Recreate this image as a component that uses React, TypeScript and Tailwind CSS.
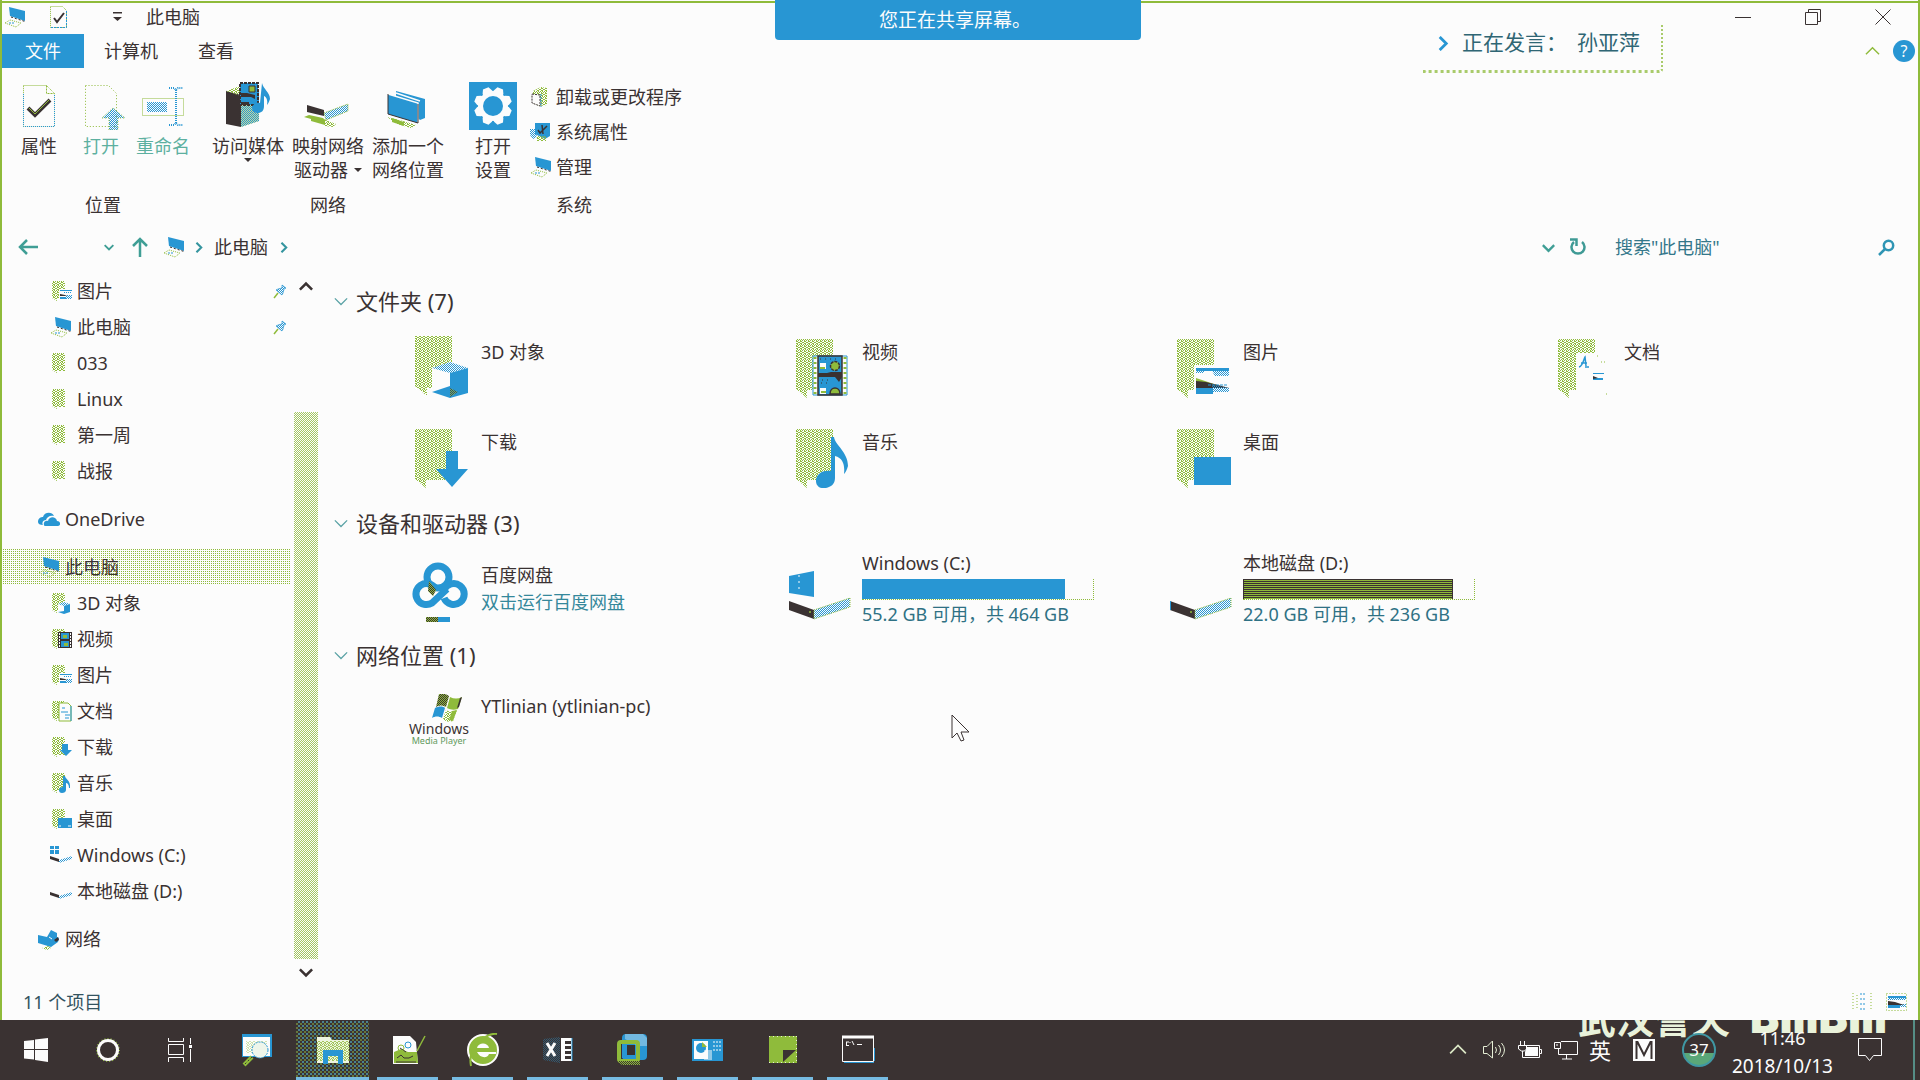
import React from "react";

const G = "#8fbb3b";
const B = "#2896d3";
const D = "#3a3232";
const W = "#fcfcfc";

function Patterns() {
  return (
    <svg className="absolute" width="0" height="0" aria-hidden="true">
      <defs>
        <pattern id="green" width="4" height="5" patternUnits="userSpaceOnUse">
          <path d="M0 0h1v1H0zM2 0h1v1H2zM1 1h1v1H1zM3 1h1v2H3zM0 2h1v1H0zM2 3h1v1H2zM1 3h1v1H1zM0 4h1v1H0zM3 4h1v1H3z" fill={G} shapeRendering="crispEdges" />
        </pattern>
        <pattern id="blue" width="2" height="2" patternUnits="userSpaceOnUse">
          <path d="M0 0h1v1H0zM1 1h1v1H1z" fill={B} shapeRendering="crispEdges" />
        </pattern>
        <pattern id="olive" width="2" height="2" patternUnits="userSpaceOnUse">
          <path d="M0 0h2v2H0z" fill={G} />
          <path d="M0 0h1v1H0zM1 1h1v1H1z" fill={D} shapeRendering="crispEdges" />
        </pattern>
      </defs>
    </svg>
  );
}

function Chevron({ dir, size, color, width = 2 }: { dir: "up" | "down" | "right"; size: number; color: string; width?: number }) {
  const d = dir === "up" ? "M1 11L8 4l7 7" : dir === "down" ? "M1 5l7 7 7-7" : "M5 1l7 7-7 7";
  return (
    <svg width={size} height={size} viewBox="0 0 16 16" fill="none" stroke={color} strokeWidth={width} aria-hidden="true">
      <path d={d} />
    </svg>
  );
}

/* ---------- small icons, 22 x 22 ---------- */

function Small({ children }: { children: React.ReactNode }) {
  return (
    <svg width="22" height="22" viewBox="0 0 22 22" className="shrink-0" aria-hidden="true">
      {children}
    </svg>
  );
}

const smallFolder = <path d="M2 1h13v18H7v2l-5-3z" fill="url(#green)" />;

function PcIcon() {
  return (
    <Small>
      <path d="M5 1l16 4v10L6 10z" fill={B} />
      <path d="M7 11l14 4.500" stroke={D} strokeWidth="1" fill="none" strokeDasharray="2 2" />
      <path d="M1 17l5-3 11 3-5 4z" fill="none" stroke={G} strokeDasharray="1 1" />
      <path d="M5 17h5" stroke={B} strokeDasharray="2 1" />
    </Small>
  );
}

function SmallIcon({ kind }: { kind: string }) {
  switch (kind) {
    case "pc":
      return <PcIcon />;
    case "folder":
      return <Small>{smallFolder}</Small>;
    case "picture":
      return (
        <Small>
          {smallFolder}
          <path d="M9 9h13v11H9z" fill={W} />
          <path d="M10 10h12v1H10zM10 17h6v2h-6z" fill={B} />
          <path d="M10 14l5 1 2 1h-7z" fill={D} />
          <path d="M14 12h8v1h-8zM16 15h6v4h-6z" fill="url(#blue)" />
        </Small>
      );
    case "3d":
      return (
        <Small>
          {smallFolder}
          <path d="M8 12l6-2 6 2v8l-6 2-6-2z" fill={W} />
          <path d="M8 12l6-2 6 2-6 2z" fill="url(#blue)" />
          <path d="M14 14l6-2v8l-6 2-6-2 6-1z" fill={B} />
        </Small>
      );
    case "video":
      return (
        <Small>
          {smallFolder}
          <path d="M8 4h14v16H8z" fill={D} />
          <path d="M11 5h8v6h-8zM11 13h8v6h-8z" fill={B} />
          <path d="M13 7h4v3h-4zM14 15h4v3h-4z" fill={G} />
          <path d="M9.500 5v14M20.500 5v14" stroke={W} strokeDasharray="2 1" />
        </Small>
      );
    case "doc":
      return (
        <Small>
          {smallFolder}
          <path d="M9 3h9l3 3v15H9z" fill={W} stroke={G} />
          <path d="M21 6v15M12 8h3M11 12h7M15 15h5M15 18h4" stroke={B} />
        </Small>
      );
    case "download":
      return (
        <Small>
          {smallFolder}
          <path d="M12 8h6v6h4l-6 6-6-6h2z" fill={B} />
        </Small>
      );
    case "music":
      return (
        <Small>
          {smallFolder}
          <path d="M13 4h2c0 3 6 4 5 12h-1c0-4-2-5-3-5v7c0 2-2 3-4 3s-3-1-3-3 2-3 4-3z" fill={B} />
        </Small>
      );
    case "desktop":
      return (
        <Small>
          {smallFolder}
          <path d="M8 10h14v10H8z" fill={B} />
          <path d="M9 18h2M18 18h3" stroke={W} />
        </Small>
      );
    case "onedrive":
      return (
        <Small>
          <path d="M0 14c0-4 3-5 5-5 1-5 9-6 11-1-4-1-7 1-8 4-4 0-4 4-3 5-3 0-5-1-5-3z" fill={B} />
          <path d="M6 17c-1-3 2-5 4-4 1-5 8-5 9 0 4 0 4 5 1 5H8c-1 0-2 0-2-1z" fill={B} />
        </Small>
      );
    case "winDrive":
      return (
        <Small>
          <path d="M0 2h4v3H0zM5 2h4v3H5zM0 6h4v4H0zM5 6h4v4H5z" fill={B} />
          <path d="M0 12l9 3v3l-9-3z" fill={D} />
          <path d="M9 16l13-4v3L9 19z" fill="url(#blue)" />
        </Small>
      );
    case "drive":
      return (
        <Small>
          <path d="M0 12l9 3v3l-9-3z" fill={D} />
          <path d="M9 16l13-4v3L9 19z" fill="url(#blue)" />
        </Small>
      );
    default:
      return (
        <Small>
          <path d="M0 7l9 2 4-7 6 3v4l2 1-1 4-7 5-13-4z" fill={B} />
          <path d="M16 12l4-3 1 3-3 2z" fill={D} />
          <path d="M11 9l3 2" stroke={W} />
          <path d="M4 20l6-2 3 2-4 2z" fill="url(#green)" />
        </Small>
      );
  }
}

function Pin() {
  return (
    <svg width="14" height="15" viewBox="0 0 14 15" className="shrink-0" aria-hidden="true">
      <path d="M9 1l4 3-2 1-1 4-1 2-6-5 2-1 4-1z" fill="url(#blue)" stroke={B} strokeWidth="0.700" />
      <path d="M5 9l-4 5" stroke={G} strokeWidth="1.500" />
    </svg>
  );
}

/* ---------- large icons, 62 x 64 ---------- */

function Large({ children }: { children: React.ReactNode }) {
  return (
    <svg width="62" height="64" viewBox="0 0 62 64" className="shrink-0" aria-hidden="true">
      {children}
    </svg>
  );
}

const bigFolder = <path d="M7 5h37v51H18v8L7 55z" fill="url(#green)" />;

function LargeIcon({ kind }: { kind: string }) {
  switch (kind) {
    case "3d":
      return (
        <Large>
          <path d="M7 2h37v52H19v8L7 52z" fill="url(#green)" />
          <path d="M24 34l18-6 18 6v24l-18 6-18-6z" fill={W} />
          <path d="M24 34l18-6 18 6-18 5z" fill="url(#blue)" />
          <path d="M42 39l18-5v25l-18 5z" fill={B} />
          <path d="M24 58l18-6v12z" fill={B} />
          <path d="M42 54l8 4-8 5z" fill="url(#olive)" opacity="0.700" />
        </Large>
      );
    case "video":
      return (
        <Large>
          {bigFolder}
          <path d="M24 22h34v39H24z" fill={W} stroke={B} />
          <path d="M26 23v38M56 23v38" stroke={G} strokeWidth="3" strokeDasharray="2 3" />
          <path d="M29 22h24v39H29z" fill={B} stroke={D} strokeWidth="1.500" />
          <path d="M29 39h9l4-1h11v5l-3 5-4-5H29z" fill={D} />
          <circle cx="46" cy="32" r="4.500" fill={G} stroke={D} strokeWidth="1.500" strokeDasharray="3 1" />
          <path d="M41 60c0-8 10-8 10 0z" fill={G} stroke={D} strokeWidth="1.500" />
          <path d="M31 29h6v6h-6zM31 54h6v6h-6z" fill={W} />
          <path d="M31 33h5v2h-5zM32 57h5v2h-5z" fill={G} />
          <path d="M31 25h20M33 46h10M32 49h8" stroke={D} strokeDasharray="1 4" />
        </Large>
      );
    case "picture":
      return (
        <Large>
          {bigFolder}
          <path d="M24 31h37v30H24z" fill={W} />
          <path d="M26 34h33v3H26z" fill={B} />
          <path d="M26 37h8v2h-8zM42 37h17v5H45z" fill="url(#blue)" />
          <path d="M26 44l9 3 12 4H26z" fill={G} />
          <path d="M26 47l10 1 12 3 11 3H26z" fill={D} />
          <path d="M26 54h17v6H26z" fill={B} />
          <path d="M42 51l17 3v4H43z" fill="url(#blue)" />
          <path d="M38 51h20" stroke={B} strokeDasharray="3 1" />
        </Large>
      );
    case "doc":
      return (
        <Large>
          {bigFolder}
          <path d="M25 19h31v42H25z" fill={W} />
          <path d="M28 33c4-1 5-9 6-10l1 9M30 29h6M34 33h4" stroke={B} strokeWidth="1.500" fill="none" />
          <path d="M42 39h11v1H42zM42 44h10v2H42z" fill={B} />
          <path d="M42 42l5 2-5 1z" fill={D} />
          <path d="M46 22h1M50 28h1M53 28h1M55 60h1" stroke={G} />
        </Large>
      );
    case "download":
      return (
        <Large>
          {bigFolder}
          <path d="M38 27h12v18h10L44 63 28 45h10z" fill={B} />
        </Large>
      );
    case "music":
      return (
        <Large>
          {bigFolder}
          <path d="M42 13h3c1 8 14 15 14 29-1 4-3 7-4 8 1-9-1-16-9-18v22c0 6-4 9-9 10-6 1-10-2-10-7 0-8 8-11 15-10z" fill={B} />
        </Large>
      );
    case "desktop":
      return (
        <Large>
          {bigFolder}
          <path d="M24 33h37v28H24z" fill={B} />
        </Large>
      );
    case "baidu":
      return (
        <Large>
          <g fill="none" stroke={B} strokeWidth="7">
            <circle cx="30" cy="15" r="11" />
            <path d="M27 26a10.500 10.500 0 1 0-3 15L39 27" />
            <path d="M36 28a10.500 10.500 0 1 1 0 8" />
          </g>
          <path d="M21 19l7 9-3 6-5-5z" fill="url(#olive)" />
          <path d="M18 55h12v5H18z" fill="url(#olive)" />
          <path d="M30 55h12v5H30z" fill={B} />
        </Large>
      );
    case "winDrive":
      return (
        <Large>
          <path d="M0 6l25-5v26L0 23z" fill={B} />
          <path d="M10 5v16" stroke={W} strokeDasharray="2 4" />
          <path d="M0 31l25 9v9L0 40z" fill={D} />
          <path d="M25 40l36-12v9L25 49z" fill="url(#blue)" stroke={G} strokeDasharray="1 1" />
          <circle cx="21" cy="42" r="1" fill={G} />
        </Large>
      );
    case "drive":
      return (
        <Large>
          <path d="M0 31l25 9v9L0 40z" fill={D} />
          <path d="M25 40l36-12v9L25 49z" fill="url(#blue)" stroke={G} strokeDasharray="1 1" />
          <path d="M0 31v9" stroke={B} strokeWidth="2" />
          <circle cx="21" cy="42" r="1" fill={G} />
        </Large>
      );
    default:
      return (
        <div className="flex w-[62px] shrink-0 flex-col items-center pt-[2px]">
          <svg width="34" height="28" viewBox="0 0 34 28" className="ml-5" aria-hidden="true">
            <path d="M7 0c4-1 7 0 10 2l-3 11C11 11 8 11 4 13z" fill="url(#olive)" />
            <path d="M18 3c4 2 8 2 12 0l-4 12c-4 1-7 1-11-1z" fill={G} />
            <path d="M28 4l2-1-3 10-2 1z" fill={D} />
            <path d="M3 14c4-2 8-2 10 0l-3 10c-3-2-7-2-10 0z" fill={B} />
            <path d="M14 16c4 2 7 2 11 0l-4 11c-4 1-7 1-10-2z" fill="url(#green)" />
            <path d="M20 17l5-1-4 11-4-1z" fill={G} />
          </svg>
          <span className="text-[14px] leading-[14px]">Windows</span>
          <span className="text-[9px] leading-[9px] text-[#5f9a5c]">Media Player</span>
        </div>
      );
  }
}

/* ---------- ribbon ---------- */

function RibbonIcon({ kind }: { kind: string }) {
  const art: Record<string, React.ReactNode> = {
    props: (
      <>
        <path d="M8.500 3.500h23l8 8v33h-31z" fill={W} stroke={G} strokeDasharray="1 1" />
        <path d="M31.500 3.500v8h8" fill="none" stroke={G} strokeDasharray="2 1" />
        <path d="M8.500 12v32.500h31V12" fill="none" stroke={B} strokeDasharray="1 1" />
        <path d="M13 26l7 7 15-15" fill="none" stroke={D} strokeWidth="4" />
        <path d="M14 26l6 6 14-14" fill="none" stroke={G} strokeWidth="1" />
      </>
    ),
    open: (
      <>
        <path d="M8.500 3.500h23l8 8v33h-31z" fill={W} stroke={G} strokeDasharray="1 2" />
        <path d="M36 26L25 36h7v12h9V36h7z" fill="url(#blue)" stroke={G} strokeDasharray="1 2" />
      </>
    ),
    rename: (
      <>
        <path d="M3.500 16.500h41v17h-41z" fill={W} stroke={G} strokeDasharray="1 1" />
        <path d="M8 20h20v10H8z" fill="url(#blue)" />
        <path d="M30 6h5l2 2 2-2h5M37 8v33M30 43h5l2-2 2 2h5" fill="none" stroke={B} strokeWidth="2" strokeDasharray="1 1" />
      </>
    ),
    media: (
      <>
        <path d="M2 9l15 4v32L2 42z" fill={D} />
        <path d="M2 9l14-5 19 5-18 5z" fill="url(#green)" />
        <path d="M17 13l18-4v30l-18 6z" fill={G} opacity="0.500" />
        <path d="M17 13l18-4v30l-18 6z" fill="url(#blue)" />
        <path d="M16 1h18v22H16z" fill={B} stroke={D} strokeWidth="2" strokeDasharray="3 1" />
        <path d="M17 11h6l8 2v4l-4-2H17zM17 20h8v3h-8z" fill={D} />
        <path d="M25 4h6v6h-6z" fill={G} stroke={D} />
        <path d="M38 1c1 6 8 9 8 16-1 3-2 5-3 6 1-6-1-8-3-9v10c0 5-3 7-6 7s-6-2-6-5 4-6 8-5z" fill={B} />
      </>
    ),
    mapdrive: (
      <>
        <path d="M3 23l17 5v6L3 30z" fill={D} />
        <path d="M20 31l24-9v7L22 38z" fill="url(#blue)" stroke={G} strokeDasharray="1 1" />
        <path d="M5 33l14 3 2 2v5L7 39v-2l-7-2z" fill={G} />
        <path d="M19 37l13 5-3 3-8-1z" fill="url(#green)" />
      </>
    ),
    addloc: (
      <>
        <path d="M12 9l29 8v19l-5 2-24-20z" fill={B} />
        <path d="M4 12l30 9v20L4 32z" fill={B} />
        <path d="M4 12l30 9v20M12 11l24 8" fill="none" stroke={W} strokeWidth="1.500" />
        <path d="M4 32l30 9V22M4 12v20" fill="none" stroke={D} />
        <path d="M3 35l16 4 13 4-5 3-14-4z" fill="url(#green)" />
        <path d="M8 36l12 4v4L8 40z" fill={G} />
      </>
    ),
    settings: (
      <>
        <path d="M0 0h48v48H0z" fill={B} />
        <g fill={W}>
          {[0, 45, 90, 135].map((a) => (
            <path key={a} d="M21 5l-2 4v30l2 4h6l2-4V9l-2-4z" transform={`rotate(${a + 22.5} 24 24)`} />
          ))}
          <circle cx="24" cy="24" r="15" />
        </g>
        <circle cx="24" cy="24" r="10" fill={B} />
      </>
    ),
  };
  return (
    <svg width="48" height="48" viewBox="0 0 48 48" aria-hidden="true">
      {art[kind]}
    </svg>
  );
}

function RibbonButton({ icon, lines, dim, arrow, className }: { icon: string; lines: string[]; dim?: boolean; arrow?: "below" | "inline"; className: string }) {
  return (
    <button type="button" className={`flex flex-col items-center whitespace-nowrap leading-6 ${dim ? "text-[#5db0a0]" : ""} ${className}`}>
      <RibbonIcon kind={icon} />
      <span className="mt-1">{lines[0]}</span>
      {arrow === "below" && <span className="h-1 border-x-4 border-t-4 border-x-transparent border-t-[#3a3232]" />}
      {lines[1] && (
        <span className="flex items-center gap-[6px]">
          {lines[1]}
          {arrow === "inline" && <span className="border-x-4 border-t-4 border-x-transparent border-t-[#3a3232]" />}
        </span>
      )}
    </button>
  );
}

function UninstallIcon() {
  return (
    <Small>
      <path d="M3 5l8-4 6 1v17l-7 1-7-3z" fill="url(#green)" />
      <path d="M2 8l8 1v11l-8-3z" fill={W} stroke={D} strokeDasharray="2 1" />
      <path d="M11 8v13" stroke={B} strokeDasharray="2 1" />
    </Small>
  );
}

function SystemIcon() {
  return (
    <Small>
      <path d="M5 2h15v13l-5 3-10-5z" fill={B} />
      <path d="M8 9l2 3 7-7M12 4l1 9" fill="none" stroke={D} strokeWidth="1.500" />
      <path d="M0 8h5l2 8-4 2-3-4z" fill="url(#blue)" />
      <path d="M7 15h9v5H7z" fill="url(#green)" />
    </Small>
  );
}

function Ribbon() {
  return (
    <div className="flex h-40 pl-[6px] pt-[14px]">
      <section className="flex w-[190px] flex-col items-center justify-between">
        <div className="flex self-start">
          <RibbonButton className="w-[62px]" icon="props" lines={["属性"]} />
          <RibbonButton className="w-[62px]" icon="open" lines={["打开"]} dim />
          <RibbonButton className="w-[62px]" icon="rename" lines={["重命名"]} dim />
        </div>
        <h2 className="pb-[11px] leading-6">位置</h2>
      </section>
      <section className="ml-[10px] flex w-60 flex-col items-center justify-between">
        <div className="flex">
          <RibbonButton className="w-20" icon="media" lines={["访问媒体"]} arrow="below" />
          <RibbonButton className="w-20" icon="mapdrive" lines={["映射网络", "驱动器"]} arrow="inline" />
          <RibbonButton className="w-20" icon="addloc" lines={["添加一个", "网络位置"]} />
        </div>
        <h2 className="pb-[11px] leading-6">网络</h2>
      </section>
      <section className="ml-3 flex w-[228px] flex-col items-center justify-between">
        <div className="flex self-start">
          <RibbonButton className="w-[66px]" icon="settings" lines={["打开", "设置"]} />
          <div className="flex flex-col gap-[11px] pl-1 pt-[3px]">
            <button type="button" className="flex items-center gap-1 whitespace-nowrap leading-6">
              <UninstallIcon />
              卸载或更改程序
            </button>
            <button type="button" className="flex items-center gap-1 leading-6">
              <SystemIcon />
              系统属性
            </button>
            <button type="button" className="flex items-center gap-1 leading-6">
              <PcIcon />
              管理
            </button>
          </div>
        </div>
        <h2 className="pb-[11px] leading-6">系统</h2>
      </section>
    </div>
  );
}

/* ---------- sidebar ---------- */

type Nav = { label: string; icon: string; top?: boolean; pin?: boolean; selected?: boolean };

const nav: Nav[] = [
  { label: "图片", icon: "picture", pin: true },
  { label: "此电脑", icon: "pc", pin: true },
  { label: "033", icon: "folder" },
  { label: "Linux", icon: "folder" },
  { label: "第一周", icon: "folder" },
  { label: "战报", icon: "folder" },
  { label: "OneDrive", icon: "onedrive", top: true },
  { label: "此电脑", icon: "pc", top: true, selected: true },
  { label: "3D 对象", icon: "3d" },
  { label: "视频", icon: "video" },
  { label: "图片", icon: "picture" },
  { label: "文档", icon: "doc" },
  { label: "下载", icon: "download" },
  { label: "音乐", icon: "music" },
  { label: "桌面", icon: "desktop" },
  { label: "Windows (C:)", icon: "winDrive" },
  { label: "本地磁盘 (D:)", icon: "drive" },
  { label: "网络", icon: "network", top: true },
];

function Sidebar() {
  return (
    <div className="flex w-[316px] shrink-0">
      <nav className="flex w-[289px] flex-col pt-[7px]">
        {nav.map((n, i) => (
          <button
            key={i}
            type="button"
            className={`flex h-9 items-center gap-[5px] pr-1 text-left ${n.top ? "mt-3 pl-9" : "pl-12"} ${
              n.selected ? "bg-[conic-gradient(#8fbb3b_25%,transparent_0)] bg-[length:2px_2px]" : ""
            }`}
          >
            <SmallIcon kind={n.icon} />
            <span className="flex-1">{n.label}</span>
            {n.pin && <Pin />}
          </button>
        ))}
      </nav>
      <div className="ml-[3px] flex w-6 flex-col items-center">
        <button type="button" aria-label="向上滚动" className="flex h-[42px] w-6 items-center justify-center">
          <Chevron dir="up" size={14} color={D} width={3} />
        </button>
        <div className="h-[104px]" />
        <div className="w-6 flex-1 bg-[conic-gradient(#8fbb3b_25%,transparent_0_50%,#8fbb3b_0_75%,transparent_0)] bg-[length:2px_2px] opacity-80" />
        <button type="button" aria-label="向下滚动" className="flex h-[25px] w-6 items-center justify-center">
          <Chevron dir="down" size={14} color={D} width={3} />
        </button>
      </div>
    </div>
  );
}

/* ---------- content ---------- */

function Group({ title, className, children }: { title: string; className: string; children: React.ReactNode }) {
  return (
    <section>
      <h2 className="flex h-8 items-center gap-2 pb-[2px] pl-4 text-[22px] leading-[30px]">
        <Chevron dir="down" size={14} color="#5aa2a5" width={1.5} />
        {title}
      </h2>
      <div className={`grid grid-cols-[repeat(3,minmax(0,381px))_minmax(0,1fr)] pl-[90px] ${className}`}>{children}</div>
    </section>
  );
}

const folders = [
  ["3d", "3D 对象"],
  ["video", "视频"],
  ["picture", "图片"],
  ["doc", "文档"],
  ["download", "下载"],
  ["music", "音乐"],
  ["desktop", "桌面"],
];

function Drive({ icon, name, detail, used, fill }: { icon: string; name: string; detail: string; used: number; fill: string }) {
  return (
    <div className="flex gap-[11px] pt-[2px]">
      <div className="pt-5">
        <LargeIcon kind={icon} />
      </div>
      <div className="w-[232px] whitespace-nowrap">
        <div className="leading-[26px]">{name}</div>
        <div role="progressbar" aria-label={name} aria-valuenow={used} className="mt-[3px] h-[21px] border-b border-r border-dotted border-[#8fbb3b]">
          <div className={`h-5 ${fill}`} style={{ width: `${used}%` }} />
        </div>
        <div className="leading-[28px] text-[#2f7184]">{detail}</div>
      </div>
    </div>
  );
}

function Content() {
  return (
    <main className="min-w-0 flex-1 pt-5">
      <Group title="文件夹 (7)" className="mt-4 gap-y-[6px]">
        {folders.map(([icon, label]) => (
          <button key={label} type="button" className="flex h-[84px] items-start gap-[11px] text-left">
            <LargeIcon kind={icon} />
            <span className="pt-1 leading-7">{label}</span>
          </button>
        ))}
      </Group>
      <Group title="设备和驱动器 (3)" className="mt-2 h-[92px]">
        <div className="flex gap-[11px] pt-[14px]">
          <LargeIcon kind="baidu" />
          <div className="leading-[27px]">
            <div>百度网盘</div>
            <div className="text-[#35889b]">双击运行百度网盘</div>
          </div>
        </div>
        <Drive icon="winDrive" name="Windows (C:)" detail="55.2 GB 可用，共 464 GB" used={88} fill="bg-[#2896d3]" />
        <Drive
          icon="drive"
          name="本地磁盘 (D:)"
          detail="22.0 GB 可用，共 236 GB"
          used={91}
          fill="border-x border-t border-[#3a3232] bg-[linear-gradient(#8fbb3b_50%,#3a3232_50%)] bg-[length:2px_2px]"
        />
      </Group>
      <Group title="网络位置 (1)" className="mt-2">
        <div className="flex gap-[11px] whitespace-nowrap pt-3">
          <LargeIcon kind="wmp" />
          <div className="leading-7">YTlinian (ytlinian-pc)</div>
        </div>
      </Group>
    </main>
  );
}

/* ---------- taskbar ---------- */

const appArt: { name: string; art: React.ReactNode }[] = [
  {
    name: "文件资源管理器",
    art: (
      <>
        <path d="M4 4h13l2 3h17v23H4z" fill="#eef4e0" />
        <path d="M4 8h32v20H4z" fill="url(#green)" opacity="0.800" />
        <path d="M10 17h20v14h-5v-8H15v8h-5z" fill={B} />
      </>
    ),
  },
  {
    name: "Notepad++",
    art: (
      <>
        <path d="M5 3h17l6 6 2 22H5z" fill={W} />
        <path d="M6 19l7-3 7 3 9 0 1 11H6z" fill={G} />
        <path d="M8 29h20M9 25l4-3 3 3h5l4-2M12 15l6 4" stroke={D} fill="none" />
        <circle cx="20" cy="12" r="3" fill={W} stroke={B} />
        <circle cx="13" cy="15" r="3" fill="none" stroke={G} />
        <path d="M37 3l-8 15" stroke={G} strokeWidth="1.500" />
      </>
    ),
  },
  {
    name: "浏览器",
    art: (
      <>
        <circle cx="20" cy="17" r="15" fill={G} stroke={W} strokeWidth="2" />
        <path d="M14 15c1-6 11-6 12 0z" fill={W} />
        <path d="M14 19h19v2H26c-2 5-9 4-12-2z" fill={W} />
        <path d="M34 1C24-1 4 14 8 33" stroke={G} strokeWidth="2" fill="none" />
      </>
    ),
  },
  {
    name: "Excel",
    art: (
      <>
        <path d="M5 6l17-2v26L5 27z" fill="url(#blue)" opacity="0.400" />
        <path d="M9 10l8 13M17 10L9 23" stroke={W} strokeWidth="3" />
        <path d="M23 5h11v23H23z" fill={W} />
        <path d="M27 8h6v3h-6zM27 13h6v3h-6zM27 18h6v3h-6zM27 23h6v3h-6z" fill={D} />
        <path d="M34 5v23" stroke={B} />
      </>
    ),
  },
  {
    name: "VMware",
    art: (
      <>
        <rect x="9" y="1" width="25" height="26" rx="4" fill={B} />
        <path d="M12 1h18l4 4v8h-9l-13-7z" fill={W} opacity="0.350" />
        <rect x="6" y="9" width="19" height="19" rx="2" fill="none" stroke={G} strokeWidth="4" />
        <path d="M4 28h23v4H9z" fill="url(#olive)" />
        <path d="M9 13h4v9h9v3H9z" fill={B} />
        <path d="M14 12h8v10h-8z" fill={D} />
      </>
    ),
  },
  {
    name: "演示",
    art: (
      <>
        <path d="M4 6h31v22H4z" fill={B} />
        <path d="M6 8h14v18H6z" fill={W} />
        <circle cx="13" cy="15" r="5" fill={B} />
        <path d="M14 9v5h5" fill={G} />
        <path d="M25 9h8M25 13h8M25 17h8" stroke={W} strokeDasharray="2 1" />
        <path d="M16 17h8v10h-8z" fill={W} opacity="0.500" />
      </>
    ),
  },
  {
    name: "便笺",
    art: (
      <>
        <path d="M6 3h28v27H6z" fill={G} />
        <path d="M6 3.500h28M33.500 3v27M6 29.500h28" stroke={W} strokeDasharray="1 3" opacity="0.800" />
        <path d="M20 17h13L20 29z" fill={D} />
      </>
    ),
  },
  {
    name: "命令提示符",
    art: (
      <>
        <path d="M4.500 3.500h31v25h-31z" fill={D} stroke={W} />
        <path d="M4 4h32" stroke={W} strokeWidth="3" />
        <path d="M8 9h3M8.500 9v3M8 12.500h3M12 9v1M14 8l2 4M19 11.500h5" stroke={W} fill="none" />
        <path d="M36.500 15v13M6 29.500h30" stroke={B} />
      </>
    ),
  },
];

function Taskbar() {
  return (
    <footer className="relative flex h-[60px] items-stretch overflow-hidden bg-[#3a3232] text-[#fcfcfc]">
      <div className="pointer-events-none absolute -top-[27px] right-[33px] flex items-end gap-5 whitespace-nowrap text-[#e9f2da]">
        <span className="font-['Noto_Sans_CJK_SC',sans-serif] text-[38px] font-bold leading-[48px]">武汉誉天</span>
        <span className="font-[Inter,sans-serif] text-[44px] font-black leading-[48px]">BiliBili</span>
      </div>

      <button type="button" aria-label="开始" className="flex w-[72px] items-center justify-center">
        <svg width="24" height="24" viewBox="0 0 24 24" fill={W} aria-hidden="true">
          <path d="M0 3l10-1v9H0zM11 1.500L24 0v11H11zM0 12h10v9.500L0 20.500zM11 12h13v12l-13-2z" />
        </svg>
      </button>
      <button type="button" aria-label="Cortana" className="flex w-[72px] items-center justify-center">
        <svg width="26" height="26" viewBox="0 0 26 26" fill="none" aria-hidden="true">
          <circle cx="13" cy="13" r="11" stroke={G} strokeWidth="2" strokeDasharray="1 2" />
          <circle cx="13" cy="13" r="9.500" stroke={W} strokeWidth="3" />
        </svg>
      </button>
      <button type="button" aria-label="任务视图" className="flex w-[72px] items-center justify-center">
        <svg width="24" height="24" viewBox="0 0 24 24" fill="none" stroke={W} aria-hidden="true">
          <path d="M.5 0v3.500h15V0M.5 6.500h15v10H.5zM.5 24v-4.500h15V24M22.500 0v6M22.500 11v13" />
          <path d="M21 7h3v3h-3z" fill={W} stroke="none" />
        </svg>
      </button>
      <button type="button" aria-label="搜索" className="ml-1 flex w-[72px] items-center justify-center">
        <svg width="34" height="34" viewBox="0 0 34 34" className="ml-[2px]" aria-hidden="true">
          <path d="M2 1h30v23H2z" fill={B} />
          <path d="M3 4h27v19H3z" fill={W} />
          <path d="M6 8h21v12H6z" fill="url(#green)" opacity="0.400" />
          <path d="M12 24l-8 8" stroke={G} strokeWidth="4" />
          <path d="M12 24l-8 8" stroke={D} strokeWidth="1" strokeDasharray="2 2" />
          <circle cx="20" cy="17" r="8" fill="#eef5ea" stroke={B} strokeDasharray="2 1" />
        </svg>
      </button>
      {appArt.map((a, i) => (
        <button
          key={a.name}
          type="button"
          aria-label={a.name}
          className={`relative flex items-center justify-center ${
            i === 0
              ? "ml-1 mr-2 mt-px w-[73px] bg-[conic-gradient(#4a8290_25%,transparent_0_50%,#66783a_0_75%,transparent_0)] bg-[length:4px_4px]"
              : "mr-[14px] w-[61px]"
          }`}
        >
          <svg width="40" height="34" viewBox="0 0 40 34" className="mb-px" aria-hidden="true">
            {a.art}
          </svg>
          <span className="absolute inset-x-0 bottom-0 h-[3px] bg-[#76bbe2]" />
        </button>
      ))}

      <div className="relative ml-auto flex items-center">
        <button type="button" aria-label="显示隐藏的图标" className="mr-4">
          <Chevron dir="up" size={18} color="#dbe8c6" width={1.5} />
        </button>
        <svg width="23" height="20" viewBox="0 0 23 20" fill="none" stroke="#e6efd6" className="mr-3" aria-label="音量">
          <path d="M.5 6.500H4L9.500 1v17L4 13.500H.5z" />
          <path d="M12.500 7q2 3 0 6M15.500 5q4 5 0 10M18.500 3q6 7 0 14" />
        </svg>
        <svg width="24" height="18" viewBox="0 0 24 18" fill="none" stroke={W} className="mr-3" aria-label="电池">
          <path d="M7 4.500h14.500v12H4.500v-4M22 8.500h1.500v4H22" />
          <path d="M9 6h11v9H7v-4z" fill={W} stroke="none" />
          <path d="M2.500 0v4M6.500 0v4M.5 4.500h8V8l-2 2h-3L.5 8zM4.500 10v3" />
        </svg>
        <svg width="24" height="19" viewBox="0 0 24 19" fill="none" stroke={W} className="mr-[11px]" aria-label="网络">
          <path d="M7 .5h16.500v13h-19V8M12.500 14v4M8 18h10" />
          <path d="M.5 1.500h6v6h-6zM3 3v2" />
        </svg>
        <span className="mr-[22px] text-[22px] leading-6">英</span>
        <svg width="22" height="22" viewBox="0 0 22 22" className="mr-[27px] shrink-0" aria-label="M">
          <path d="M0 0h22v22H0z" fill={W} />
          <path d="M3.500 20V3h1l6.500 13L17.500 3h1v17" fill="none" stroke={D} strokeWidth="2" />
        </svg>
        <div className="mr-4 flex size-[34px] items-center justify-center rounded-full border-2 border-[#3f97a3] bg-[linear-gradient(#3a3232_60%,#5aa778_60%)] text-[17px]">37</div>
        <div className="mr-[25px] mt-[3px] text-center leading-[28px]">
          <div>11:46</div>
          <div className="text-[19px]">2018/10/13</div>
        </div>
        <button type="button" aria-label="通知" className="mr-[30px]">
          <svg width="25" height="24" viewBox="0 0 25 24" fill="none" stroke={W} aria-hidden="true">
            <path d="M.5.5h23v17h-8l-4 5-4-5h-7z" />
          </svg>
        </button>
        <div className="mr-[5px] h-[60px] w-[2px] bg-[#558d86]" />
      </div>
    </footer>
  );
}

/* ---------- window ---------- */

export default function App() {
  return (
    <div className="relative flex min-h-screen flex-col bg-[#fcfcfc] font-['Noto_Sans','Noto_Sans_CJK_SC',sans-serif] text-[18px] text-[#3a3232]">
      <Patterns />
      <div className="flex flex-1 flex-col border-x-2 border-[#8fbb3b]">
        <header className="mt-px flex h-[33px] items-center border-t-2 border-[#8fbb3b] pb-1">
          <div className="flex flex-1 items-center">
            <span className="ml-[2px] w-[46px]">
              <PcIcon />
            </span>
            <svg width="18" height="22" viewBox="0 0 18 22" fill="none" aria-hidden="true">
              <path d="M.5.5h12l4 4v17H.5z" stroke={G} strokeDasharray="1 1" />
              <path d="M16.500 5v16.500H1" stroke={B} strokeDasharray="2 1" />
              <path d="M4 12l3 4 7-9" stroke={D} strokeWidth="2" />
            </svg>
            <svg width="9" height="9" viewBox="0 0 9 9" className="ml-[45px] mr-6" aria-hidden="true">
              <path d="M0 0h9v1.500H0zM0 5h9L4.500 9z" fill={D} />
            </svg>
            <h1 className="leading-6">此电脑</h1>
          </div>
          <button type="button" aria-label="最小化" className="flex w-[70px] justify-center">
            <svg width="16" height="16" viewBox="0 0 16 16" stroke={D} aria-hidden="true">
              <path d="M0 8.500h16" />
            </svg>
          </button>
          <button type="button" aria-label="还原" className="flex w-[70px] justify-center">
            <svg width="16" height="16" viewBox="0 0 16 16" stroke={D} fill="none" aria-hidden="true">
              <path d="M.5 3.500h12v12H.5zM3.500 3V.5h12v12H13" />
            </svg>
          </button>
          <button type="button" aria-label="关闭" className="flex w-[70px] justify-center">
            <svg width="16" height="16" viewBox="0 0 16 16" stroke={D} aria-hidden="true">
              <path d="M.5.5l15 15M15.500.5l-15 15" />
            </svg>
          </button>
        </header>

        <div className="flex h-[34px] items-stretch">
          <button type="button" className="w-[82px] bg-[#2896d3] text-[#fcfcfc]">文件</button>
          <button type="button" className="ml-5">计算机</button>
          <button type="button" className="ml-10">查看</button>
          <div className="ml-auto flex items-center gap-[13px] pr-[3px]">
            <Chevron dir="up" size={15} color={G} width={1.5} />
            <button type="button" aria-label="帮助" className="flex size-[22px] items-center justify-center rounded-full bg-[#2896d3] text-[16px] leading-5 text-[#fcfcfc]">
              ?
            </button>
          </div>
        </div>

        <Ribbon />

        <div className="flex h-[38px] items-center">
          <button type="button" aria-label="后退" className="ml-4">
            <svg width="20" height="18" viewBox="0 0 20 18" fill="none" stroke="#3f9e95" strokeWidth="2.500" aria-hidden="true">
              <path d="M9 2L2 9l7 7M2 9h18" />
            </svg>
          </button>
          <button type="button" aria-label="最近位置" className="ml-[66px]">
            <Chevron dir="down" size={10} color="#3f9e95" width={3} />
          </button>
          <button type="button" aria-label="上移" className="ml-[17px]">
            <svg width="18" height="20" viewBox="0 0 18 20" fill="none" stroke="#3f9e95" strokeWidth="2.500" aria-hidden="true">
              <path d="M2 9l7-7 7 7M9 2v18" />
            </svg>
          </button>
          <div className="ml-[14px] flex flex-1 items-center">
            <PcIcon />
            <span className="ml-2 mr-[10px]">
              <Chevron dir="right" size={11} color="#35959f" width={3} />
            </span>
            此电脑
            <span className="ml-[10px]">
              <Chevron dir="right" size={11} color="#35959f" width={3} />
            </span>
          </div>
          <button type="button" aria-label="历史记录" className="mr-[15px]">
            <Chevron dir="down" size={13} color="#3f9e95" width={3} />
          </button>
          <button type="button" aria-label="刷新" className="mr-7">
            <svg width="17" height="18" viewBox="0 0 17 18" fill="none" stroke="#3f9a95" strokeWidth="2.500" aria-hidden="true">
              <path d="M12 4a6.500 6.500 0 1 1-8 0M0 1.500h6.500V8" />
            </svg>
          </button>
          <input
            type="text"
            aria-label="搜索"
            placeholder={'搜索"此电脑"'}
            className="w-[250px] bg-transparent p-0 outline-none placeholder:text-[#34778a]"
          />
          <button type="button" aria-label="开始搜索" className="ml-[13px] mr-[23px]">
            <svg width="17" height="17" viewBox="0 0 17 17" fill="none" stroke="#2f95b4" strokeWidth="2.500" aria-hidden="true">
              <circle cx="10.500" cy="6.500" r="4.700" />
              <path d="M7 10l-6 6" />
            </svg>
          </button>
        </div>

        <div className="flex flex-1">
          <Sidebar />
          <Content />
        </div>

        <div className="flex h-9 items-center pl-[21px] pr-[10px]">
          <span className="flex-1 text-[#33535f]">11 个项目</span>
          <button type="button" aria-label="详细信息" className="mr-[14px]">
            <svg width="20" height="20" viewBox="0 0 20 20" fill="none" aria-hidden="true">
              <path d="M1 1v18M5 3v15M19 1v16" stroke={G} strokeDasharray="1 2" />
              <path d="M8 2h5M8 7h5M8 12h5M8 17h5" stroke={B} strokeDasharray="2 1" />
            </svg>
          </button>
          <button type="button" aria-label="大图标">
            <svg width="22" height="18" viewBox="0 0 22 18" fill="none" aria-hidden="true">
              <path d="M.5.5h20v17H.5z" stroke={G} strokeDasharray="1 2" />
              <path d="M2 3h18v2H2zM2 12h12v3H2z" fill={B} />
              <path d="M2 5h18v2H2zM13 11h7v3h-7z" fill="url(#blue)" />
              <path d="M2 8l7 1 9 3H2z" fill={D} />
            </svg>
          </button>
        </div>
      </div>
      <Taskbar />

      <div className="absolute inset-x-0 top-0 flex justify-center pr-1">
        <div className="flex h-10 w-[366px] items-center justify-center rounded-b-sm bg-[#2896d3] pr-[6px] text-[19px] text-[#fcfcfc]">您正在共享屏幕。</div>
      </div>
      <div className="absolute right-[257px] top-6 flex h-[49px] w-[240px] items-center whitespace-nowrap rounded-br border-b-[3px] border-r-2 border-dotted border-[#a9cb6b] pb-2 pl-3 text-[21px] text-[#2f6674]">
        <Chevron dir="right" size={15} color={B} width={3} />
        <span className="ml-3">正在发言：</span>
        <span className="ml-[10px]">孙亚萍</span>
      </div>
      <svg width="19" height="28" viewBox="0 0 19 28" className="absolute left-[951px] top-[714px]" aria-hidden="true">
        <path d="M1 1v23l5-5 4 8 3-1-3-8h8z" fill={W} stroke={D} />
      </svg>
    </div>
  );
}
